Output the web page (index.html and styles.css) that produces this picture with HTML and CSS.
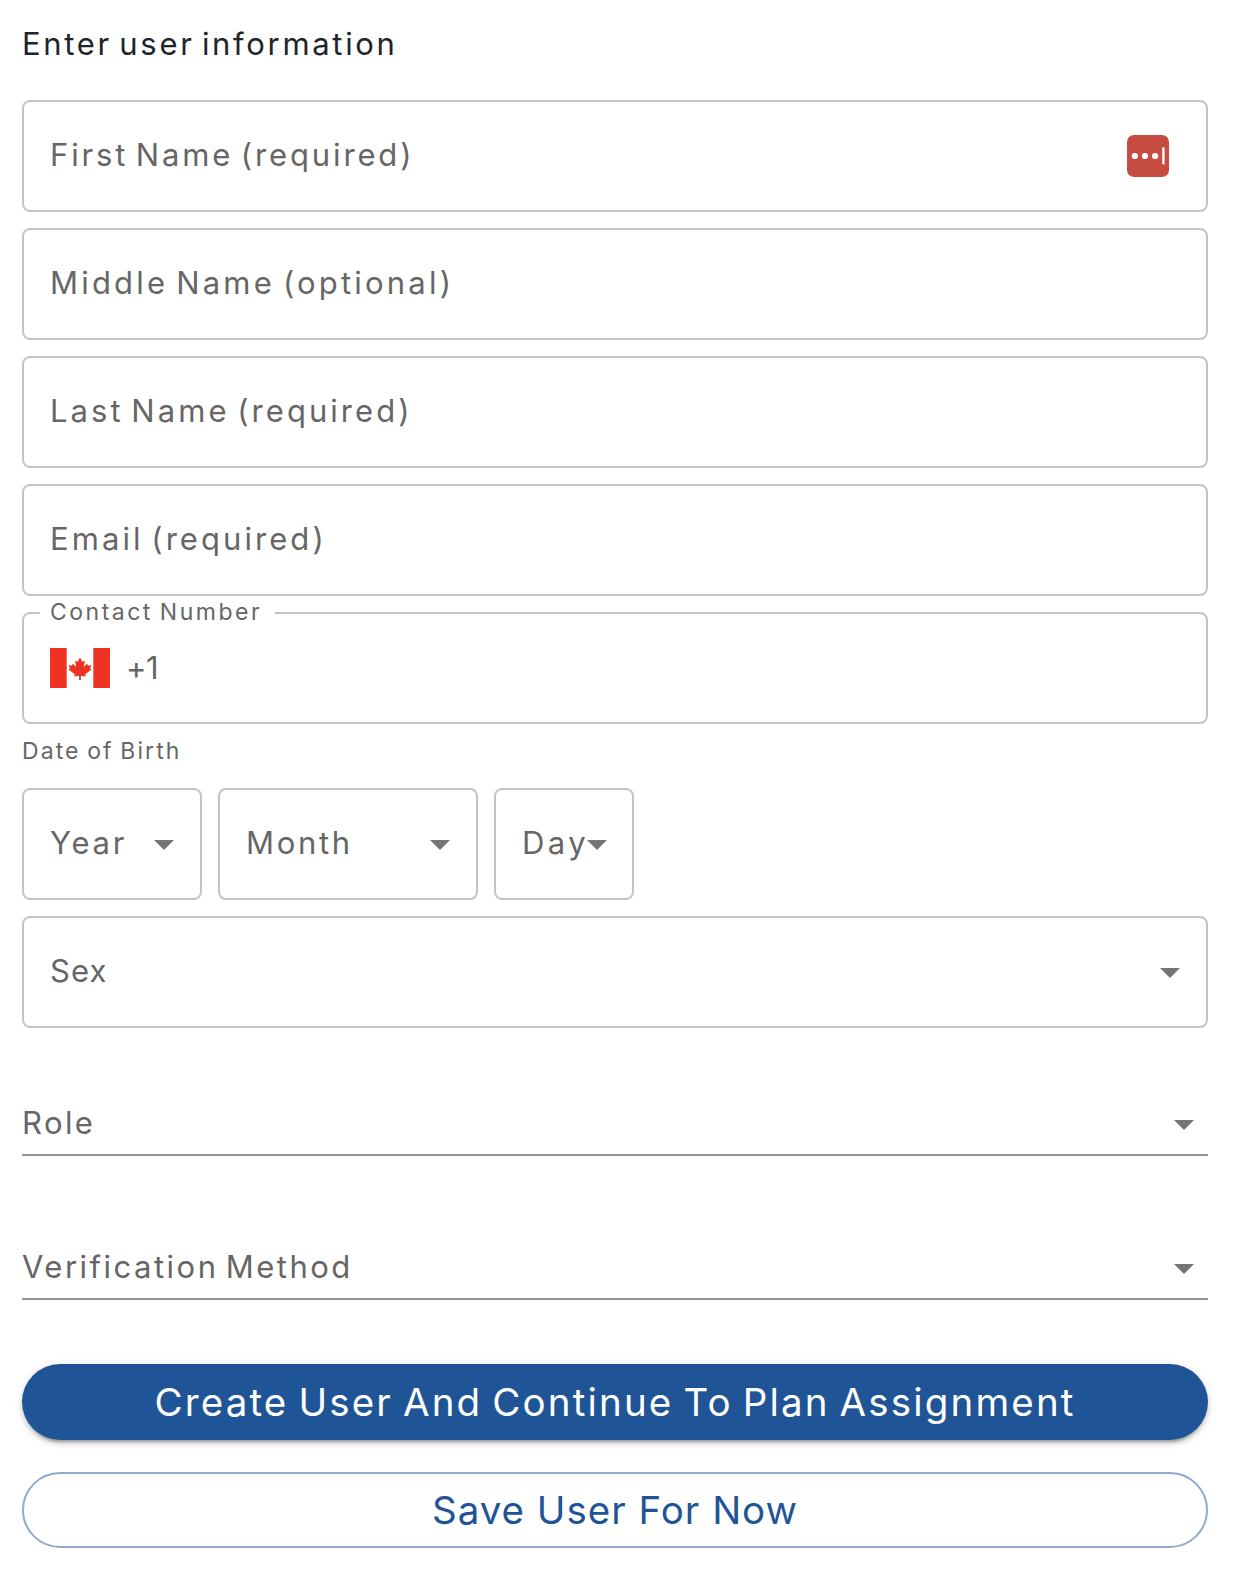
FILE: index.html
```
<!DOCTYPE html>
<html lang="en">
<head>
<meta charset="utf-8">
<title>Enter user information</title>
<link rel="stylesheet" href="styles.css">
</head>
<body>
<main class="form">
  <h1 class="title">Enter user information</h1>

  <div class="stack">
    <div class="field">
      <span class="label first-name">First Name (required)</span>
      <svg class="autofill" viewBox="0 0 42 42">
        <rect width="42" height="42" rx="7" fill="#c74d43"/>
        <g fill="#fff"><circle cx="7.8" cy="21" r="3.1"/><circle cx="18" cy="21" r="3.1"/><circle cx="28.1" cy="21" r="3.1"/><rect x="35.2" y="12.3" width="2.4" height="17.2" rx="1.1"/></g>
      </svg>
    </div>
    <div class="field"><span class="label middle-name">Middle Name (optional)</span></div>
    <div class="field"><span class="label last-name">Last Name (required)</span></div>
    <div class="field"><span class="label email">Email (required)</span></div>
    <div class="field phone">
      <span class="floating">Contact Number</span>
      <svg class="flag" viewBox="0 0 60 40">
        <rect width="60" height="40" fill="#fff"/>
        <path fill="#ee3224" d="M0 0h16.7v40H0zM43.3 0H60v40H43.3zM30 9.5l-2.4 4.3-2.6-1.1 1.3 6.4-3.5-3.3-.8 1.8-3.2-.4 1 3.2-1.3 1.1 6.3 4.8-.6 2.2 4.9-.7V32h1.8v-4.2l4.9.7-.6-2.2 6.3-4.8-1.3-1.1 1-3.2-3.2.4-.8-1.8-3.5 3.3 1.3-6.4-2.6 1.1z"/>
      </svg>
      <span class="label code">+1</span>
    </div>
  </div>

  <div class="caption">Date of Birth</div>
  <div class="dates">
    <div class="field select year"><span class="label">Year</span><svg class="arrow" viewBox="0 0 20 10"><path d="M0 0h20L10 10z"/></svg></div>
    <div class="field select month"><span class="label">Month</span><svg class="arrow" viewBox="0 0 20 10"><path d="M0 0h20L10 10z"/></svg></div>
    <div class="field select day"><span class="label">Day</span><svg class="arrow" viewBox="0 0 20 10"><path d="M0 0h20L10 10z"/></svg></div>
  </div>
  <div class="field select sex"><span class="label">Sex</span><svg class="arrow" viewBox="0 0 20 10"><path d="M0 0h20L10 10z"/></svg></div>

  <div class="line-select role"><span class="label">Role</span><svg class="arrow" viewBox="0 0 20 10"><path d="M0 0h20L10 10z"/></svg></div>
  <div class="line-select verification"><span class="label">Verification Method</span><svg class="arrow" viewBox="0 0 20 10"><path d="M0 0h20L10 10z"/></svg></div>

  <button class="button primary" type="button">Create User And Continue To Plan Assignment</button>
  <button class="button outlined" type="button">Save User For Now</button>
</main>
</body>
</html>
```
FILE: styles.css
```
* { box-sizing: border-box; }

body {
  margin: 0;
  background: #fff;
  color: #666;
  font-family: Inter, "Open Sans", sans-serif;
  font-size: 31px;
}

.form {
  display: flex;
  flex-direction: column;
  width: 1208px;
  padding: 22px 0 0 22px;
}

.title {
  height: 78px;
  margin: 0;
  color: #212529;
  font-size: 31px;
  font-weight: 400;
  line-height: 44px;
  letter-spacing: 2.68px;
  word-spacing: -4px;
}

.stack { display: flex; flex-direction: column; gap: 16px; }

.field {
  display: flex;
  align-items: center;
  height: 112px;
  padding: 0 37px 0 26px;
  border: 2px solid #c4c4c4;
  border-radius: 8px;
}

.label {
  padding-bottom: 2px;
  line-height: 44px;
  white-space: nowrap;
  word-spacing: -4px;
}

.first-name { letter-spacing: 2.86px; }
.middle-name { letter-spacing: 3.2px; }
.last-name { letter-spacing: 3.04px; }
.email { letter-spacing: 3.06px; }

.autofill { width: 42px; height: 42px; margin-left: auto; }

.phone { position: relative; padding-left: 26px; }

/* Label sits over the top border and masks it */
.floating {
  position: absolute;
  top: -17px;
  left: 16px;
  width: 235px;
  padding-left: 10px;
  background: #fff;
  font-size: 23px;
  line-height: 30px;
  letter-spacing: 2.5px;
  word-spacing: -2px;
  white-space: nowrap;
}

.flag { width: 60px; height: 40px; }
.code { margin-left: 16px; padding-bottom: 0; letter-spacing: -.5px; }

.caption {
  height: 64px;
  padding-top: 12px;
  font-size: 23px;
  line-height: 30px;
  letter-spacing: 2.1px;
  word-spacing: -2px;
}

.dates { display: flex; gap: 16px; margin-bottom: 16px; }
.select { justify-content: space-between; padding-right: 26px; }
.year { width: 180px; letter-spacing: 2.75px; }
.month { width: 260px; letter-spacing: 2.7px; }
.day { width: 140px; letter-spacing: 3.5px; }
.sex { letter-spacing: 1.12px; }

.arrow { flex: none; width: 20px; height: 10px; margin-top: 2px; fill: #757575; }
.day .arrow { margin-left: -6px; margin-right: -1px; }

.line-select {
  display: flex;
  align-items: center;
  justify-content: space-between;
  height: 64px;
  padding: 2px 14px 0 0;
  border-bottom: 2px solid #949494;
}
.role { margin-top: 64px; letter-spacing: 2.4px; }
.verification { margin-top: 80px; letter-spacing: 2.5px; }

.button {
  height: 76px;
  padding: 0;
  border: 0;
  border-radius: 38px;
  font-family: inherit;
  font-size: 38.5px;
  font-weight: 400;
  line-height: 76px;
  text-align: center;
}

.primary {
  margin-top: 64px;
  background: #1f5597;
  color: #fff;
  letter-spacing: 2.16px;
  word-spacing: -3px;
  box-shadow: 0 6px 2px -4px rgba(0, 0, 0, .2), 0 4px 4px rgba(0, 0, 0, .14), 0 2px 10px rgba(0, 0, 0, .12);
}

.outlined {
  margin-top: 32px;
  border: 2px solid #8faacb;
  background: #fff;
  color: #1f5597;
  line-height: 72px;
  letter-spacing: .99px;
}
```
